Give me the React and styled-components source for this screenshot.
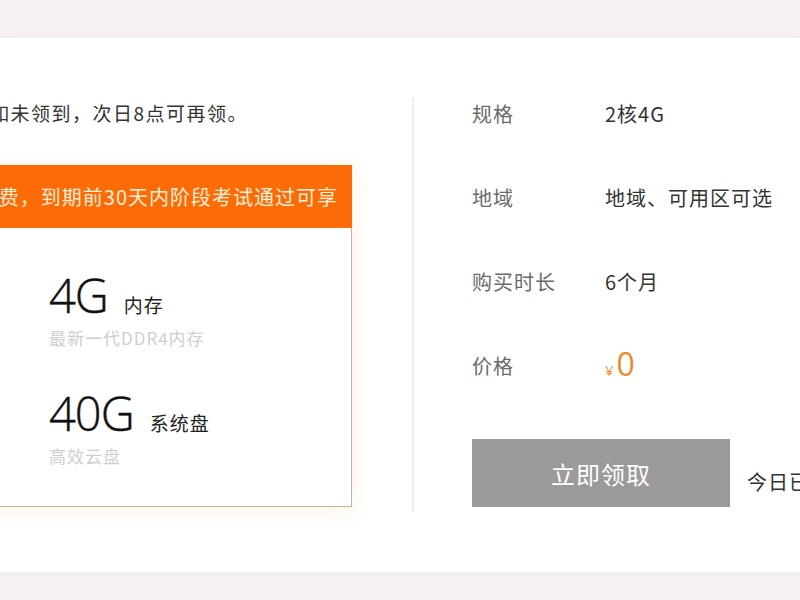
import React from "react";
import styled, { createGlobalStyle } from "styled-components";

const GlobalStyle = createGlobalStyle`
  html, body {
    margin: 0;
    padding: 0;
    background: #f6f1f0;
    font-family: "Noto Sans CJK SC", "Noto Sans", sans-serif;
    overflow: hidden;
  }
`;

const specs = [
  { label: "规格", value: "2核4G" },
  { label: "地域", value: "地域、可用区可选" },
  { label: "购买时长", value: "6个月" },
];

const features = [
  { amount: "4G", unit: "内存", desc: "最新一代DDR4内存" },
  { amount: "40G", unit: "系统盘", desc: "高效云盘" },
];

export default function App() {
  return (
    <>
      <GlobalStyle />
      <Page>
        <Panel>
          <LeftCol>
            <Notice>如未领到，次日8点可再领。</Notice>
            <Card>
              <CardHeader>费，到期前30天内阶段考试通过可享</CardHeader>
              <CardBody>
                {features.map((f) => (
                  <Feature key={f.amount}>
                    <AmountLine>
                      <Amount>{f.amount}</Amount>
                      <Unit>{f.unit}</Unit>
                    </AmountLine>
                    <Desc>{f.desc}</Desc>
                  </Feature>
                ))}
              </CardBody>
            </Card>
          </LeftCol>
          <Divider />
          <RightCol>
            {specs.map((s) => (
              <SpecRow key={s.label}>
                <Label>{s.label}</Label>
                <Value>{s.value}</Value>
              </SpecRow>
            ))}
            <SpecRow>
              <Label>价格</Label>
              <Price>
                <Currency>¥</Currency>
                <PriceNum>0</PriceNum>
              </Price>
            </SpecRow>
            <Actions>
              <ClaimButton disabled>立即领取</ClaimButton>
              <SoldOut>今日已领完</SoldOut>
            </Actions>
          </RightCol>
        </Panel>
      </Page>
    </>
  );
}

const Page = styled.div`
  width: 800px;
  height: 600px;
  padding-top: 38px;
  box-sizing: border-box;
  overflow: hidden;
`;

const Panel = styled.div`
  height: 534px;
  background: #fff;
  display: flex;
  overflow: hidden;
  box-shadow: 0 0 10px rgba(180, 150, 140, 0.08);
`;

const LeftCol = styled.div`
  width: 412px;
  flex-shrink: 0;
  padding-top: 62px;
  box-sizing: border-box;
`;

const Notice = styled.div`
  margin-left: -10px;
  font-size: 19px;
  letter-spacing: 1.5px;
  line-height: 26px;
  color: #333;
  white-space: nowrap;
`;

const Card = styled.div`
  margin-top: 39px;
  margin-left: -40px;
  width: 392px;
  box-sizing: border-box;
  border: 1px solid #c6b690;
  background: #fff;
  box-shadow: 0 4px 20px rgba(235, 195, 120, 0.22);
`;

const CardHeader = styled.div`
  height: 63px;
  margin: -1px -1px 0 -1px;
  background: #fb6b07;
  color: #fdeed6;
  font-size: 20px;
  letter-spacing: 1px;
  display: flex;
  align-items: center;
  justify-content: flex-end;
  padding-right: 14px;
  white-space: nowrap;
  overflow: hidden;
`;

const CardBody = styled.div`
  padding: 44px 0 38px 88px;
  display: flex;
  flex-direction: column;
  gap: 40px;
`;

const Feature = styled.div`
  display: flex;
  flex-direction: column;
  gap: 8px;
`;

const AmountLine = styled.div`
  display: flex;
  align-items: baseline;
  height: 46px;
`;

const Amount = styled.span`
  font-family: "Open Sans", "Noto Sans", sans-serif;
  font-weight: 300;
  font-size: 47px;
  line-height: 46px;
  color: #111;
  letter-spacing: -1px;
  -webkit-text-stroke: 0.4px #111;
`;

const Unit = styled.span`
  margin-left: 16px;
  font-size: 19px;
  color: #222;
  letter-spacing: 1px;
`;

const Desc = styled.div`
  font-size: 17px;
  line-height: 24px;
  letter-spacing: 1px;
  color: #cfcfcf;
`;

const Divider = styled.div`
  width: 2px;
  margin-top: 59px;
  height: 415px;
  background: #eeeeee;
  flex-shrink: 0;
`;

const RightCol = styled.div`
  padding: 61px 0 0 58px;
  display: flex;
  flex-direction: column;
  flex-shrink: 0;
`;

const SpecRow = styled.div`
  display: flex;
  align-items: center;
  height: 28px;
  margin-bottom: 56px;
  &:nth-of-type(4) {
    margin-bottom: 60px;
  }
`;

const Label = styled.div`
  width: 133px;
  font-size: 20px;
  letter-spacing: 1px;
  color: #6b6b6b;
`;

const Value = styled.div`
  font-size: 20px;
  letter-spacing: 1px;
  color: #333;
  white-space: nowrap;
`;

const Price = styled.div`
  display: flex;
  align-items: baseline;
  color: #ef8a2c;
  font-family: "Open Sans", "Noto Sans", sans-serif;
`;

const Currency = styled.span`
  font-size: 15px;
  margin-right: 3px;
`;

const PriceNum = styled.span`
  font-size: 32px;
  line-height: 28px;
`;

const Actions = styled.div`
  display: flex;
  margin-top: -56px;
  padding-top: 56px;
`;

const ClaimButton = styled.button`
  width: 258px;
  height: 68px;
  border: none;
  background: #9a9a9a;
  color: #fff;
  font-family: "Noto Sans CJK SC", "Noto Sans", sans-serif;
  font-size: 24px;
  letter-spacing: 1px;
  cursor: not-allowed;
`;

const SoldOut = styled.div`
  align-self: flex-end;
  margin: 0 0 11px 17px;
  font-size: 20px;
  line-height: 28px;
  letter-spacing: 1px;
  color: #333;
  white-space: nowrap;
`;
